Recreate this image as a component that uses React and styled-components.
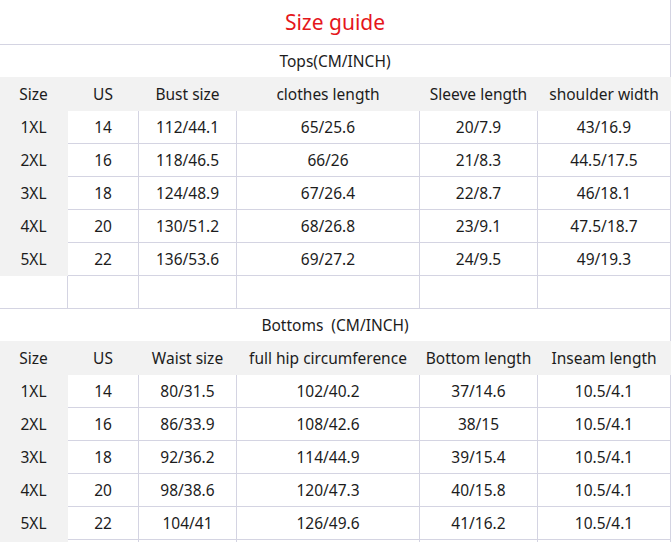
import React from 'react';
import styled, { createGlobalStyle } from 'styled-components';

const GlobalStyle = createGlobalStyle`
  body {
    margin: 0;
    background: #fff;
    font-family: "Noto Sans", "Open Sans", sans-serif;
    color: #1c1c1c;
  }
`

const Sheet = styled.div`
  width: 671px;
  height: 542px;
  overflow: hidden;
`

const Title = styled.div`
  height: 45px;
  box-sizing: border-box;
  border-bottom: 1px solid #d4d4e2;
  border-right: 1px solid #d4d4e2;
  display: flex;
  align-items: center;
  justify-content: center;
  color: #e5161b;
  font-size: 21px;
`

const Section = styled.div`
  height: 32px;
  border-right: 1px solid #d4d4e2;
  display: flex;
  align-items: center;
  justify-content: center;
  font-size: 15.5px;
  white-space: pre;
`

const Grid = styled.div`
  display: grid;
  grid-template-columns: 68px 71px 98px 183px 118px 133px;
`

const Cell = styled.div`
  height: ${p => p.$h || 33}px;
  box-sizing: border-box;
  display: flex;
  align-items: center;
  justify-content: center;
  font-size: 15.5px;
  white-space: nowrap;
  background: ${p => (p.$gray ? '#f2f2f2' : '#fff')};
  border-right: 1px solid ${p => (p.$gray ? '#f2f2f2' : '#d4d4e2')};
  border-bottom: 1px solid ${p => (p.$gray ? '#f2f2f2' : '#d4d4e2')};
`

const tops = {
  head: ['Size', 'US', 'Bust size', 'clothes length', 'Sleeve length', 'shoulder width'],
  rows: [
    ['1XL', '14', '112/44.1', '65/25.6', '20/7.9', '43/16.9'],
    ['2XL', '16', '118/46.5', '66/26', '21/8.3', '44.5/17.5'],
    ['3XL', '18', '124/48.9', '67/26.4', '22/8.7', '46/18.1'],
    ['4XL', '20', '130/51.2', '68/26.8', '23/9.1', '47.5/18.7'],
    ['5XL', '22', '136/53.6', '69/27.2', '24/9.5', '49/19.3'],
  ],
}

const bottoms = {
  head: ['Size', 'US', 'Waist size', 'full hip circumference', 'Bottom length', 'Inseam length'],
  rows: [
    ['1XL', '14', '80/31.5', '102/40.2', '37/14.6', '10.5/4.1'],
    ['2XL', '16', '86/33.9', '108/42.6', '38/15', '10.5/4.1'],
    ['3XL', '18', '92/36.2', '114/44.9', '39/15.4', '10.5/4.1'],
    ['4XL', '20', '98/38.6', '120/47.3', '40/15.8', '10.5/4.1'],
    ['5XL', '22', '104/41', '126/49.6', '41/16.2', '10.5/4.1'],
  ],
}

function Table({ data }) {
  return (
    <Grid>
      {data.head.map((h, i) => (
        <Cell key={'h' + i} $gray $h={34}>{h}</Cell>
      ))}
      {data.rows.map((r, ri) =>
        r.map((v, ci) => (
          <Cell key={ri + '-' + ci} $gray={ci === 0}>{v}</Cell>
        ))
      )}
    </Grid>
  )
}

export default function App() {
  return (
    <Sheet>
      <GlobalStyle />
      <Title>Size guide</Title>
      <Section>Tops(CM/INCH)</Section>
      <Table data={tops} />
      <Grid>
        {[0, 1, 2, 3, 4, 5].map(i => <Cell key={i} />)}
      </Grid>
      <Section>Bottoms  (CM/INCH)</Section>
      <Table data={bottoms} />
      <Grid>
        {[0, 1, 2, 3, 4, 5].map(i => <Cell key={i} $gray={i === 0} />)}
      </Grid>
    </Sheet>
  )
}
